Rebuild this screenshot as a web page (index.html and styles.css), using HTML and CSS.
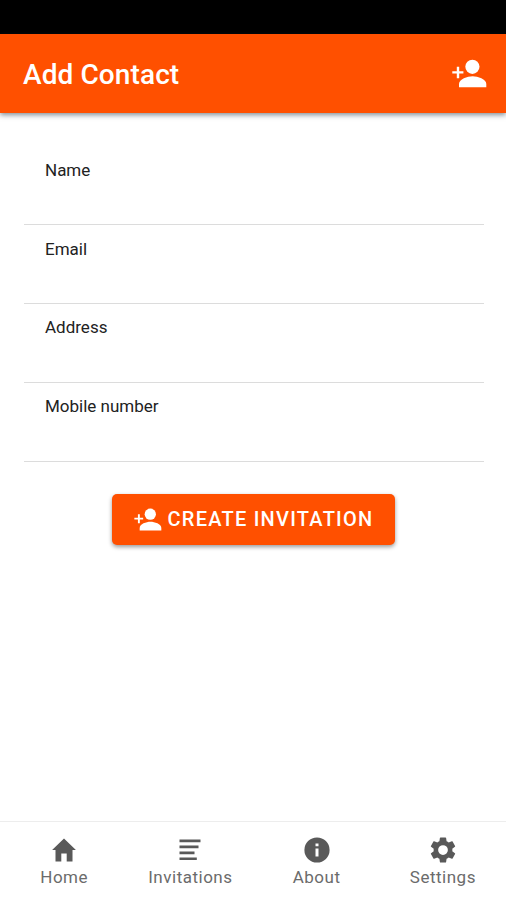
FILE: index.html
```html
<!DOCTYPE html>
<html lang="en">
<head>
<meta charset="utf-8">
<title>Add Contact</title>
<link rel="stylesheet" href="styles.css">
</head>
<body>
<svg width="0" height="0" class="defs">
  <symbol id="person-add" viewBox="0 0 35 29">
    <path d="M4.8 7.8h2.4v4.4h4.2v2.3H7.2v4.8H4.8v-4.8H.3v-2.3h4.5z"/>
    <circle cx="20.4" cy="7.8" r="7.1"/>
    <path d="M7 28.3v-3.2c0-5 8.4-7.8 13.6-7.8s13.7 2.8 13.7 7.8v3.2z"/>
  </symbol>
</svg>
<div class="app">
  <div class="status"></div>
  <header class="toolbar">
    <h1 class="title">Add Contact</h1>
    <svg class="toolbar-icon"><use href="#person-add"/></svg>
  </header>
  <main class="content">
    <form class="form">
      <div class="field"><span class="label">Name</span></div>
      <div class="field"><span class="label">Email</span></div>
      <div class="field tight"><span class="label">Address</span></div>
      <div class="field tight"><span class="label">Mobile number</span></div>
    </form>
    <button class="create" type="button">
      <svg class="create-icon"><use href="#person-add"/></svg>
      <span class="create-text">CREATE INVITATION</span>
    </button>
  </main>
  <nav class="tabs">
    <a class="tab">
      <svg class="tab-icon" viewBox="0 0 28 28"><path d="M11.3 25.5v-8h5.4v8h5.8V14h3.4L14 2.6 2.1 14h3.4v11.5z"/></svg>
      <span>Home</span>
    </a>
    <a class="tab">
      <svg class="tab-icon" viewBox="0 0 28 28"><path d="M3.5 3.5h21v2.7h-21zM3.5 9.6h19v2.7h-19zM3.5 15.5h15v2.7h-15zM3.5 21.4h17.3v2.7H3.5z"/></svg>
      <span>Invitations</span>
    </a>
    <a class="tab">
      <svg class="tab-icon" viewBox="0 0 28 28"><path fill-rule="evenodd" d="M14 1.4a12.6 12.6 0 1 0 0 25.2 12.6 12.6 0 0 0 0-25.2zM12.5 7.5h3v2.8h-3zM12.5 12.4h3v8h-3z"/></svg>
      <span>About</span>
    </a>
    <a class="tab">
      <svg class="tab-icon" viewBox=".8 .8 22.4 22.4"><path d="M19.43 12.98c.04-.32.07-.64.07-.98s-.03-.66-.07-.98l2.11-1.65c.19-.15.24-.42.12-.64l-2-3.46c-.12-.22-.39-.3-.61-.22l-2.49 1c-.52-.4-1.08-.73-1.69-.98l-.38-2.65A.49.49 0 0 0 14 2h-4c-.25 0-.46.18-.49.42l-.38 2.65c-.61.25-1.17.59-1.69.98l-2.49-1c-.23-.09-.49 0-.61.22l-2 3.46c-.13.22-.07.49.12.64l2.11 1.65c-.04.32-.07.65-.07.98s.03.66.07.98l-2.11 1.65c-.19.15-.24.42-.12.64l2 3.46c.12.22.39.3.61.22l2.49-1c.52.4 1.08.73 1.69.98l.38 2.65c.03.24.24.42.49.42h4c.25 0 .46-.18.49-.42l.38-2.65c.61-.25 1.17-.59 1.69-.98l2.49 1c.23.09.49 0 .61-.22l2-3.46c.12-.22.07-.49-.12-.64zM12 15.9a3.9 3.9 0 1 1 0-7.8 3.9 3.9 0 0 1 0 7.8z"/></svg>
      <span>Settings</span>
    </a>
  </nav>
</div>
</body>
</html>
```
FILE: styles.css
```css
* { box-sizing: border-box; }
body { margin: 0; font-family: Roboto, sans-serif; background: #fff; color: #222; }
.defs { display: none; }
.app { display: flex; flex-direction: column; height: 900px; }
.status { height: 34px; background: #000; }
.toolbar {
  display: flex; align-items: center; justify-content: space-between;
  height: 79px; padding: 0 19px 0 23px;
  background: #ff5000; color: #fff;
  box-shadow: 0 2px 5px rgba(30, 50, 65, .55);
}
.title { margin: 0; padding-top: 2px; font-size: 28px; font-weight: 500; line-height: 36px; letter-spacing: .1px; }
.toolbar-icon { width: 35px; height: 29px; fill: #fff; }
.content { flex: 1; display: flex; flex-direction: column; align-items: center; padding-top: 33px; }
.form { width: 100%; padding: 0 22px 0 24px; }
.field { height: 79px; padding: 14px 21px 0; border-bottom: 1px solid #dcdcdc; }
.field.tight { padding-top: 13px; }
.label { display: block; font-size: 17px; line-height: 20px; }
.create {
  display: flex; align-items: center; gap: 6px;
  width: 283px; height: 51px; margin: 32px 0 0; padding: 0 0 0 22px;
  border: 0; border-radius: 5px; background: #ff5000; color: #fff;
  font: 500 20px/24px Roboto, sans-serif; letter-spacing: 1.25px; white-space: nowrap;
  box-shadow: 0 2px 4px rgba(0, 0, 0, .4);
}
.create-icon { width: 28px; height: 23px; fill: #fff; }
.create-text { padding-bottom: 2px; }
.tabs { display: flex; height: 79px; padding-left: 1px; border-top: 1px solid #ededed; }
.tab {
  flex: 1 1 0; display: flex; flex-direction: column; align-items: center;
  padding-top: 14px; color: #6b6b6b; font-size: 17px; line-height: 20px; letter-spacing: .5px;
}
.tab-icon { width: 28px; height: 28px; margin-bottom: 3px; fill: #595959; }
```
